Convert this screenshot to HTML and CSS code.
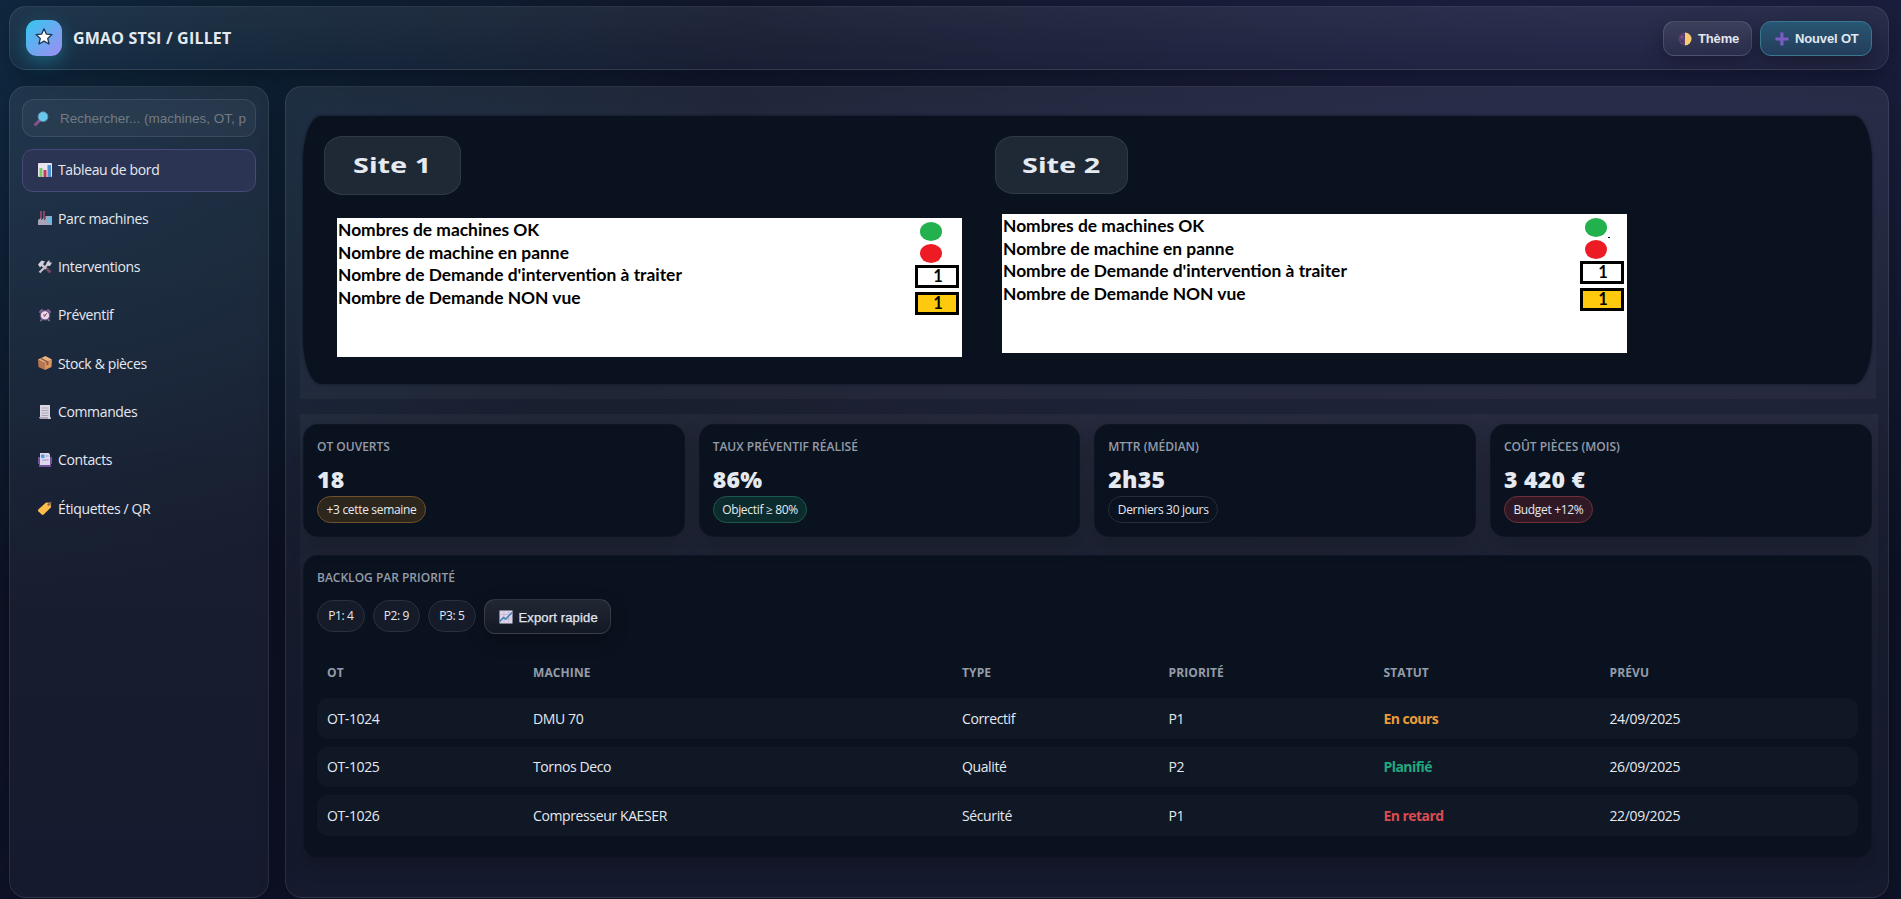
FILE: index.html
```html
<!DOCTYPE html>
<html lang="fr">
<head>
<meta charset="utf-8">
<title>GMAO STSI / GILLET</title>
<link rel="stylesheet" href="styles.css">
</head>
<body>
<header class="topbar panel">
  <div class="logo"><svg width="20" height="20" viewBox="0 0 20 20"><path d="M10 1.800l2.300 5.300 5.700.5-4.300 3.800 1.300 5.600L10 14.100l-5 2.900 1.300-5.600L2 7.600l5.700-.5z" fill="#fff" stroke="#1b3550" stroke-width="1.300" stroke-linejoin="round"/></svg></div>
  <h1 class="title">GMAO STSI / GILLET</h1>
  <div class="actions">
    <button class="btn theme"><svg width="14" height="14" viewBox="0 0 14 14"><path d="M7 .5a6.500 6.500 0 0 0 0 13z" fill="#59406f"/><path d="M7 .5a6.500 6.500 0 0 1 0 13z" fill="#fbcb72"/><circle cx="3.800" cy="5" r="1.200" fill="#7b5a86"/><circle cx="4.500" cy="9.500" r="1" fill="#433059"/></svg><span>Thème</span></button>
    <button class="btn primary"><svg width="14" height="14" viewBox="0 0 14 14"><path d="M5.300 .5h3.200v4.900h5v3.200h-5v4.900H5.300V8.600H.5V5.400h4.800z" fill="#7b5cc4"/></svg><span>Nouvel OT</span></button>
  </div>
</header>
<div class="shell">
  <aside class="sidebar panel">
    <label class="search">
      <svg width="15" height="15" viewBox="0 0 15 15"><path d="M1.500 13.500l4-4" stroke="#8b4f8c" stroke-width="3" stroke-linecap="round"/><circle cx="9" cy="5.700" r="4.900" fill="#6cc5ec" stroke="#4e8fb2" stroke-width=".8"/></svg>
      <span class="placeholder">Rechercher... (machines, OT, p</span>
    </label>
    <nav class="nav">
      <a class="item active"><svg width="14" height="14" viewBox="0 0 14 14"><rect width="14" height="14" rx="1" fill="#e9e4f0"/><path d="M1.500 5h3v9h-3z" fill="#7ec66b"/><path d="M5.500 7h3v7h-3z" fill="#c0395c"/><path d="M9.500 2h3.500v12H9.500z" fill="#4d8fd0"/></svg>Tableau de bord</a>
      <a class="item"><svg width="14" height="14" viewBox="0 0 14 14"><path d="M2 0h2v8H2zM5 0h2v8H5z" fill="#864668"/><path d="M0 9l3-2v2l3-2v2l2-1v6H0z" fill="#aaa3b5"/><rect x="7.500" y="5" width="6.500" height="9" fill="#9aa9c0"/><path d="M9 6.500h1.700v2H9zM11.400 6.500h1.600v2h-1.600zM9 9.500h1.700v2H9zM11.400 9.500h1.600v2h-1.600z" fill="#4bc5f5"/></svg>Parc machines</a>
      <a class="item"><svg width="14" height="14" viewBox="0 0 14 14"><path d="M8 8l4.500 4.500" stroke="#76455f" stroke-width="3"/><path d="M0 4.500L3.500.5 7 1.500l-2 2.700L9 8 7 9.500 3.500 6 2 7.500z" fill="#d5cfdd"/><path d="M1.500 12.500L10 4" stroke="#c5bfcd" stroke-width="2.300"/><path d="M8.500 5.500V2.500L11.500 0v2.500L14 2.500 12 6z" fill="#d5cfdd"/></svg>Interventions</a>
      <a class="item"><svg width="14" height="14" viewBox="0 0 14 14"><path d="M2 4l2-2M12 4l-2-2M4 11l-1 1.500M10 11l1 1.500" stroke="#7c6599" stroke-width="2" stroke-linecap="round"/><circle cx="7" cy="7.300" r="4.700" fill="#e4dbea" stroke="#745381" stroke-width="1.200"/><path d="M6 9l3-4M5 7h3" stroke="#a7456b" stroke-width="1"/></svg>Préventif</a>
      <a class="item"><svg width="14" height="14" viewBox="0 0 14 14"><path d="M0 3.500L7 7v7L.5 11z" fill="#b97650"/><path d="M14 3.500L7 7v7l6.500-3z" fill="#d9955e"/><path d="M0 3.500L7.500 0 14 3.500 7 7z" fill="#ecb47b"/><path d="M3.500 2l7 3.400v3l-2 1V6.200L2 2.700z" fill="#8f5c49"/></svg>Stock &amp; pièces</a>
      <a class="item"><svg width="14" height="14" viewBox="0 0 14 14"><path d="M2 0h10v11l1 3H3L1 12.500h1z" fill="#ddd7e5"/><path d="M3.500 3h7M3.500 5.500h7M3.500 8h7M3.500 10.500h7" stroke="#9d94a9" stroke-width=".8"/><path d="M1 12h9v2H2z" fill="#b1a6bd"/></svg>Commandes</a>
      <a class="item"><svg width="14" height="14" viewBox="0 0 14 14"><path d="M0 4h2v7H0zM12 4h2v7h-2zM1 11h12v3H1z" fill="#6f529a"/><path d="M2 0h9l1 2v10H2z" fill="#ded8ef"/><rect x="3" y="1.500" width="3.500" height="3.500" fill="#4e9bd8"/><path d="M7.500 3h3M4 7h6.500" stroke="#a290c1"/></svg>Contacts</a>
      <a class="item"><svg width="14" height="14" viewBox="0 0 14 14"><path d="M.3 8.500L8 1.500l4.500.3.5 4.500-7.300 7.200q-1 .8-2 0L.3 10.200q-.7-.8 0-1.700z" fill="#ffbd4c"/><circle cx="10.600" cy="3.700" r="1.100" fill="#6c4a43"/><path d="M10.500 3.500q2-4 3-1.500" fill="none" stroke="#8b646d"/></svg>Étiquettes / QR</a>
    </nav>
  </aside>
  <main class="main panel">
    <section class="zone upper">
      <div class="hero">
        <div class="site site-one">
          <div class="site-tag"><span>Site 1</span></div>
          <div class="board">
            <ul class="labels"><li>Nombres de machines OK</li><li>Nombre de machine en panne</li><li>Nombre de Demande d'intervention à traiter</li><li>Nombre de Demande NON vue</li></ul>
            <div class="marks"><i class="dot green"></i><i class="dot red"></i><b class="count">1</b><b class="count yellow">1</b></div>
          </div>
        </div>
        <div class="site site-two">
          <div class="site-tag"><span>Site 2</span></div>
          <div class="board">
            <ul class="labels"><li>Nombres de machines OK</li><li>Nombre de machine en panne</li><li>Nombre de Demande d'intervention à traiter</li><li>Nombre de Demande NON vue</li></ul>
            <div class="marks"><i class="dot green speck"></i><i class="dot red"></i><b class="count">1</b><b class="count yellow">1</b></div>
          </div>
        </div>
      </div>
    </section>
    <section class="zone lower">
      <div class="kpis">
        <article class="card"><h2>OT OUVERTS</h2><strong>18</strong><span class="chip warn">+3 cette semaine</span></article>
        <article class="card"><h2>TAUX PRÉVENTIF RÉALISÉ</h2><strong>86%</strong><span class="chip ok">Objectif ≥ 80%</span></article>
        <article class="card"><h2>MTTR (MÉDIAN)</h2><strong>2h35</strong><span class="chip">Derniers 30 jours</span></article>
        <article class="card"><h2>COÛT PIÈCES (MOIS)</h2><strong>3 420 €</strong><span class="chip bad">Budget +12%</span></article>
      </div>
      <article class="card backlog">
        <h2>BACKLOG PAR PRIORITÉ</h2>
        <div class="filters">
          <span class="pill">P1: 4</span><span class="pill">P2: 9</span><span class="pill">P3: 5</span>
          <button class="btn export"><svg width="14" height="14" viewBox="0 0 14 14"><rect x=".5" y=".5" width="13" height="13" fill="#ddd5e8"/><path d="M.5 4.500h13M.5 9h13M5 .5v13M9.500 .5v13" stroke="#b9adc9" stroke-width=".6"/><path d="M.8 11.500l3.500-4 2.500 1.500L13 2.500" fill="none" stroke="#4282b8" stroke-width="1.500"/></svg><span>Export rapide</span></button>
        </div>
        <div class="table">
          <div class="row head"><span>OT</span><span>MACHINE</span><span>TYPE</span><span>PRIORITÉ</span><span>STATUT</span><span>PRÉVU</span></div>
          <div class="row"><span>OT-1024</span><span>DMU 70</span><span>Correctif</span><span>P1</span><span class="s-warn">En cours</span><span>24/09/2025</span></div>
          <div class="row"><span>OT-1025</span><span>Tornos Deco</span><span>Qualité</span><span>P2</span><span class="s-ok">Planifié</span><span>26/09/2025</span></div>
          <div class="row"><span>OT-1026</span><span>Compresseur KAESER</span><span>Sécurité</span><span>P1</span><span class="s-bad">En retard</span><span>22/09/2025</span></div>
        </div>
      </article>
    </section>
  </main>
</div>
</body>
</html>
```
FILE: styles.css
```css
* { box-sizing: border-box; }
body {
  margin: 0; height: 899px; overflow: hidden; padding: 6px 12px 1px 9px;
  display: flex; flex-direction: column; gap: 16px;
  font-family: "Open Sans", "Noto Sans", sans-serif; font-size: 14px; color: #e5e9f0;
  background:
    radial-gradient(800px 560px at -3% 5%, rgba(34, 140, 205, .2), transparent),
    radial-gradient(1400px 620px at 85% -5%, rgba(110, 100, 225, .19), transparent),
    linear-gradient(#0b1220, #0e1328);
}
.panel {
  border: 1px solid rgba(255, 255, 255, .09); border-radius: 17px;
  background: linear-gradient(rgba(255, 255, 255, .07), rgba(255, 255, 255, .03));
  box-shadow: 0 8px 26px rgba(0, 0, 0, .28);
}
.topbar { height: 64px; flex: none; display: flex; align-items: center; padding: 0 16px; }
.logo {
  width: 36px; height: 36px; border-radius: 11px; display: grid; place-items: center;
  background: linear-gradient(135deg, #31c8ee, #a18cf4); box-shadow: 0 6px 18px rgba(34, 200, 238, .32);
}
.logo svg { margin-top: -2px; }
.title { margin: 0 auto 0 11px; font-size: 16px; font-weight: 700; letter-spacing: .2px; }
.actions { display: flex; gap: 8px; margin-top: 1px; }
.btn {
  height: 35px; border-radius: 11px; border: 1px solid rgba(255, 255, 255, .12);
  display: flex; align-items: center; gap: 6px; padding: 0 12px 0 14px; color: #e2e6ef;
  font-family: "Liberation Sans", Arial, sans-serif; font-size: 13px; font-weight: 700; white-space: nowrap;
  background: linear-gradient(rgba(255, 255, 255, .09), rgba(255, 255, 255, .03));
  box-shadow: 0 6px 18px rgba(0, 0, 0, .3);
}
.btn svg { flex: none; }
.theme { width: 89px; letter-spacing: -.15px; }
.primary { width: 112px; letter-spacing: -.15px; border-color: #397790; background: linear-gradient(#285673, #233d5b); }
.shell { flex: 1; min-height: 0; display: grid; grid-template-columns: 260px 1604px; gap: 16px; }
.sidebar { padding: 12px; }
.search {
  height: 38px; border: 1px solid rgba(255, 255, 255, .09); border-radius: 12px; margin-bottom: 12px;
  background: rgba(255, 255, 255, .045); display: flex; align-items: center; gap: 11px; padding: 0 4px 0 11px;
}
.search svg { flex: none; }
.placeholder { white-space: nowrap; color: #737a83; font: 13.500px "Liberation Sans", Arial, sans-serif; }
.nav { display: flex; flex-direction: column; gap: 6px; }
.item { height: 42.300px; border: 1px solid transparent; border-radius: 11px; display: flex; align-items: center; gap: 6px; padding: 0 15px 1.500px; font-size: 14px; letter-spacing: -.36px; }
.active { background: #2c3453; border-color: #46497a; height: 43px; }
.main { padding: 0 10px 0 14px; display: flex; flex-direction: column; }
.zone { padding: 29px 4.500px 15px 3px; }
.upper { margin-right: 2px; background: linear-gradient(transparent 35%, rgba(255, 255, 255, .03)); }
.hero {
  height: 268px; border-radius: 18px / 46px; display: flex; background: #0b121f;
  box-shadow: 0 0 3px rgba(10, 17, 30, .9); padding: 20px 0 0 21px;
}
.site-one { width: 671px; }
.site-tag {
  width: 137px; height: 59px; border: 1px solid #303945; border-radius: 19px / 16px; background: #1f2835;
  display: grid; place-items: center; font: 700 21.500px "Noto Sans", sans-serif; padding-bottom: 2px;
}
.site-tag span { transform: scaleX(1.340); }
.site-two .site-tag { width: 133px; height: 58px; }
.board {
  width: 625px; height: 139px; margin: 23px 0 0 13px; background: #fff; color: #000;
  display: flex; justify-content: space-between; padding: 1px 3px 0 1px;
}
.site-two .board { margin: 20px 0 0 7px; }
.labels { list-style: none; margin: 0; padding: 0; font: 700 17.400px/22.600px "Lato", sans-serif; }
.marks { width: 44px; padding-top: 3px; }
.dot { display: block; width: 22px; height: 19px; border-radius: 50%; margin: 0 0 3px 5px; }
.green { background: #22b14c; }
.red { background: #ed1c24; margin-bottom: 2px; }
.speck { position: relative; }
.speck::after { content: ""; position: absolute; left: 23px; top: 19px; width: 2px; height: 1px; background: #000; }
.count { display: block; height: 23px; border: 3px solid #000; margin-bottom: 4px; text-align: center; padding-left: 2px; font: 700 16.500px/16px "Lato", sans-serif; }
.yellow { background: #ffc90e; }
.lower { margin-top: 15px; padding: 10px 6.500px 0 3px; flex: 0 0 440px; background: linear-gradient(rgba(255, 255, 255, .04), transparent); }
.kpis { display: grid; grid-template-columns: repeat(4, 1fr); gap: 14px; }
.card { background: #0b121f; border-radius: 15px; border: 1px solid rgba(255, 255, 255, .02); padding: 13px 13px 0; box-shadow: 0 7px 20px rgba(0, 0, 0, .2); }
.kpis .card { height: 113px; display: flex; flex-direction: column; align-items: flex-start; }
.card h2 { margin: 0; font-size: 12px; line-height: 18px; font-weight: 600; letter-spacing: 0; color: #949ca9; white-space: nowrap; }
.card strong { font-size: 23px; font-weight: 800; line-height: 28px; margin-top: 9px; letter-spacing: .3px; }
.chip { height: 27px; border: 1px solid #252e3a; border-radius: 14px; padding: 0 8.500px; font-size: 12px; line-height: 25px; letter-spacing: -.32px; margin-top: 3px; }
.warn { background: #2d261d; border-color: #70512a; }
.ok { background: #0b2b2d; border-color: #1b5a4d; }
.bad { background: #301924; border-color: #71303b; }
.backlog { margin-top: 18px; height: 303px; }
.filters { display: flex; align-items: flex-start; gap: 8px; margin: 12px 0 29px; padding-top: 1px; }
.pill { width: 47.500px; height: 32px; border: 1px solid #29313e; border-radius: 16px; background: #151b29; text-align: center; font-size: 12px; line-height: 29px; letter-spacing: -.4px; }
.export { width: 127px; margin-top: -1px; padding: 1px 12px 0 14px; font-size: 13px; letter-spacing: .15px; font-weight: 400; -webkit-text-stroke: .25px; }
.table { display: flex; flex-direction: column; gap: 8px; }
.row { height: 40.500px; border-radius: 11px; background: #101725; display: grid; grid-template-columns: 206px 429px 206.500px 215px 226px 1fr; align-items: center; padding-left: 10px; font-size: 14px; letter-spacing: -.38px; }
.head { background: none; height: 19px; margin-bottom: 8px; font-size: 12px; font-weight: 700; color: #949ca9; letter-spacing: .1px; }
.s-warn { color: #eb9c38; font-weight: 700; }
.s-ok { color: #22a980; font-weight: 700; }
.s-bad { color: #dc4c50; font-weight: 700; }
.s-warn, .s-ok, .s-bad { letter-spacing: -.55px; }
```
